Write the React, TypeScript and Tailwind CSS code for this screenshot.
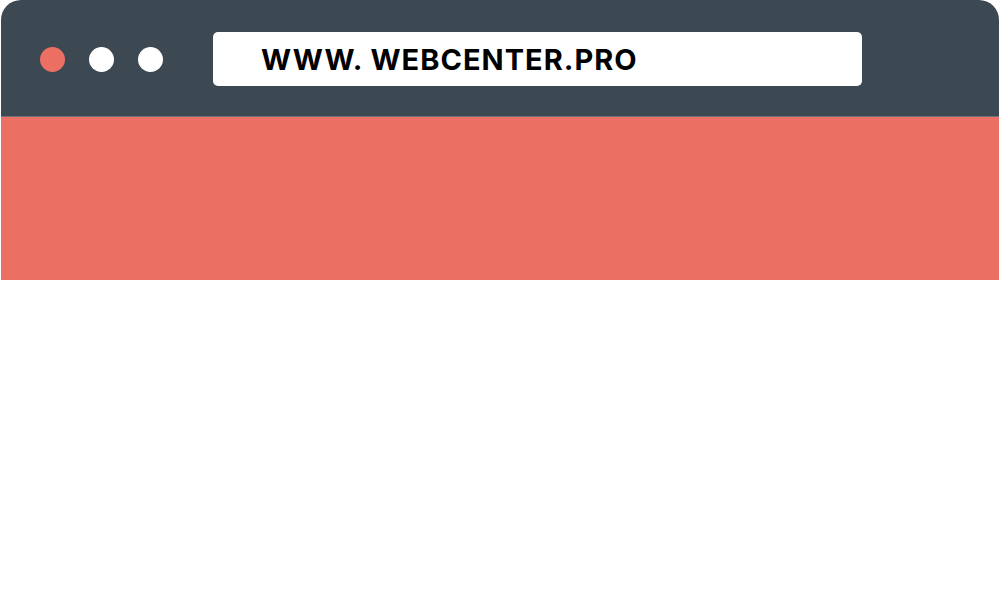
export default function App() {
  return (
    <div className="h-[596px] w-[999px] bg-white" style={{ fontFamily: "Inter, 'Liberation Sans', sans-serif" }}>
      <div className="ml-[1px] overflow-hidden rounded-t-[20px]">
        <header className="flex h-[116px] items-center bg-[#3c4852] pt-[2px]">
          <div className="ml-[39px] flex items-center gap-[24px]">
            <span className="h-[25px] w-[25px] rounded-full bg-[#ec6f64]" />
            <span className="h-[25px] w-[25px] rounded-full bg-white" />
            <span className="h-[25px] w-[25px] rounded-full bg-white" />
          </div>
          <div className="ml-[50px] flex h-[54px] w-[649px] items-center rounded-[5px] bg-white pl-[48px]">
            <span className="pt-[2px] text-[29px] font-bold tracking-[0.035em] text-black">WWW. WEBCENTER.PRO</span>
          </div>
        </header>
        <div className="h-px bg-[#6b7278]" />
        <div className="h-[163px] bg-[#ec6f64]" />
      </div>
    </div>
  );
}
